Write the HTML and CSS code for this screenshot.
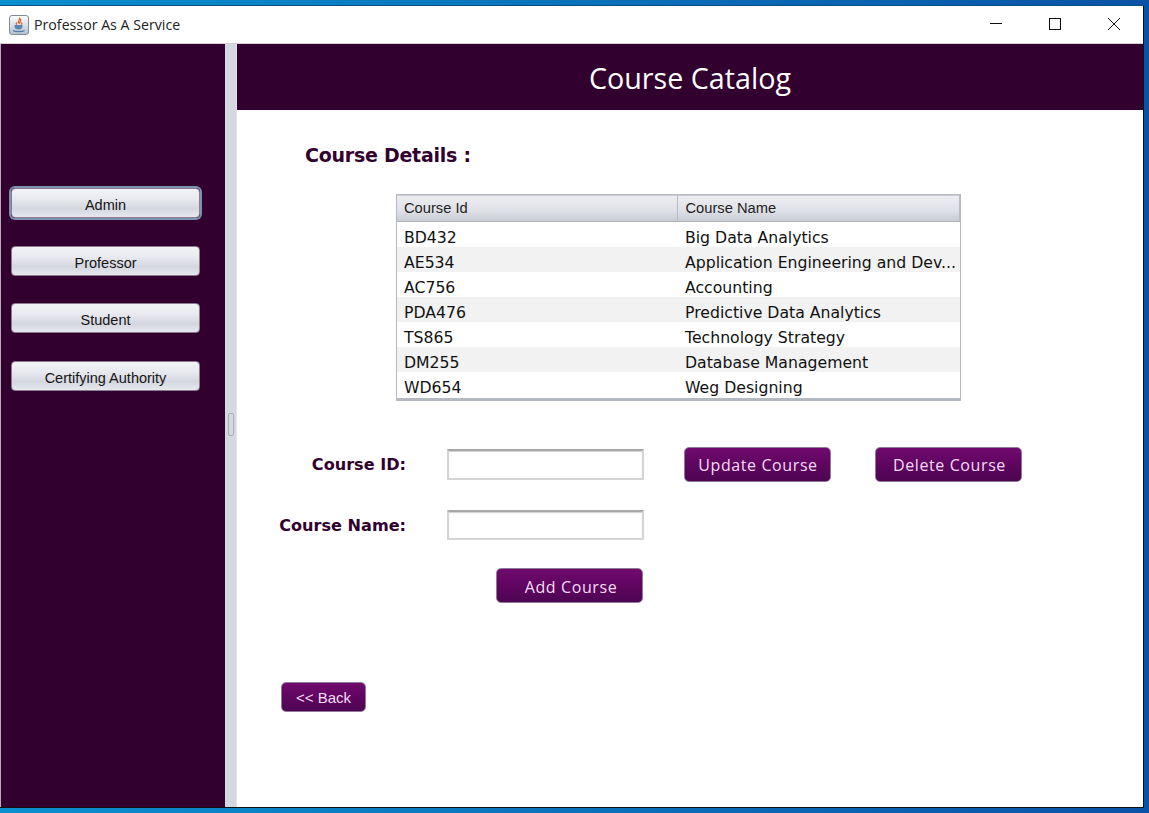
FILE: index.html
```html
<!DOCTYPE html>
<html>
<head>
<meta charset="UTF-8">
<title>Professor As A Service</title>
<link rel="stylesheet" href="styles.css">
</head>
<body>
<div class="window">
	<div class="titlebar">
		<svg class="java_icon" width="20" height="20" viewBox="0 0 20 20">
			<defs>
				<linearGradient id="icon_bg" x1="0" y1="0" x2="0" y2="1">
					<stop offset="0" stop-color="#fdfdfd"/>
					<stop offset="1" stop-color="#b4c2d2"/>
				</linearGradient>
			</defs>
			<rect x="0.5" y="0.5" width="19" height="19" rx="2.5" fill="url(#icon_bg)" stroke="#7f8c99"/>
			<path d="M10.500 2.500c1.500 2-2 3-1 5 .3.6 1 1 1 1-.9-1.200 2.600-2.600.9-4.600M8 7.500c-1 1-1 1.500 0 2M12 7.500c1 1 1 1.500 0 2" fill="none" stroke="#d9622b" stroke-width="1.200"/>
			<path d="M5.500 10h8v1.500c0 2-1.500 3-4 3s-4-1-4-3z" fill="#5b86ad"/>
			<path d="M4 15.500c2 1.500 9 1.500 11.500 0" fill="none" stroke="#4f7aa3" stroke-width="1.200"/>
		</svg>
		<span class="win_title">Professor As A Service</span>
		<div class="win_btns">
			<svg width="59" height="38" viewBox="0 0 59 38"><path d="M24 17.500h12" stroke="#111" fill="none"/></svg>
			<svg width="59" height="38" viewBox="0 0 59 38"><rect x="24.500" y="12.500" width="11" height="11" stroke="#111" fill="none"/></svg>
			<svg width="59" height="38" viewBox="0 0 59 38"><path d="M24 12l12 12M36 12L24 24" stroke="#111" fill="none"/></svg>
		</div>
	</div>
	<div class="app">
		<div class="sidebar">
			<button class="side_btn focused">Admin</button>
			<button class="side_btn">Professor</button>
			<button class="side_btn">Student</button>
			<button class="side_btn">Certifying Authority</button>
		</div>
		<div class="splitter"><span class="grip"></span></div>
		<div class="main">
			<div class="header">Course Catalog</div>
			<h2 class="section_title">Course Details :</h2>
			<div class="table_wrap">
				<table class="course_table">
					<thead>
						<tr><th class="col_id">Course Id</th><th>Course Name</th></tr>
					</thead>
					<tbody>
						<tr><td>BD432</td><td>Big Data Analytics</td></tr>
						<tr><td>AE534</td><td>Application Engineering and Dev...</td></tr>
						<tr><td>AC756</td><td>Accounting</td></tr>
						<tr><td>PDA476</td><td>Predictive Data Analytics</td></tr>
						<tr><td>TS865</td><td>Technology Strategy</td></tr>
						<tr><td>DM255</td><td>Database Management</td></tr>
						<tr><td>WD654</td><td>Weg Designing</td></tr>
					</tbody>
				</table>
			</div>
			<div class="form_row first_row">
				<label class="field_label">Course ID:</label>
				<input class="field_input" type="text">
				<button class="purple_btn update_btn">Update Course</button>
				<button class="purple_btn delete_btn">Delete Course</button>
			</div>
			<div class="form_row">
				<label class="field_label">Course Name:</label>
				<input class="field_input short" type="text">
			</div>
			<div class="form_row add_row">
				<button class="purple_btn add_btn">Add Course</button>
			</div>
			<button class="purple_btn back_btn">&lt;&lt; Back</button>
		</div>
	</div>
</div>
</body>
</html>
```

FILE: styles.css
```css
*{margin: 0;padding: 0;box-sizing: border-box;}
html,body{height: 813px;overflow: hidden;}
body{
	background: linear-gradient(90deg, #0a8fcf 0%, #0a78c0 40%, #0a52a8 100%);
	padding-top: 5px;
	font-family: "Liberation Sans", sans-serif;
}
.window{
	width: 1144px;
	height: 803px;
	border-top: 1px solid #08507f;
	border-right: 1px solid #111;
	border-bottom: 1px solid #111;
	display: flex;
	flex-direction: column;
	background: #fff;
}
.titlebar{
	height: 38px;
	flex: none;
	display: flex;
	align-items: center;
	padding-left: 9px;
	background: #fff;
	border-bottom: 1px solid #d8cfd8;
}
.java_icon{flex: none;margin-top: 1px;}
.win_title{
	margin-left: 5px;
	font-family: "Open Sans", sans-serif;
	font-size: 14.200px;
	color: #222;
}
.win_btns{margin-left: auto;display: flex;}
.win_btns svg{display: block;}
.app{flex: 1;display: flex;min-height: 0;}
.sidebar{
	width: 225px;
	flex: none;
	background: #32002f;
	border-left: 1px solid #b9aab9;
	padding: 144px 0 0 10px;
}
.side_btn{
	display: block;
	width: 189px;
	height: 30px;
	margin-bottom: 27.500px;
	padding-top: 4px;
	border: 1px solid #8d7a90;
	border-radius: 4px;
	background: linear-gradient(180deg, #f2f3f6 0%, #e9eaef 35%, #d5d7e0 70%, #e6e8ee 100%);
	font-family: "Liberation Sans", sans-serif;
	font-size: 14.500px;
	color: #151515;
}
.side_btn.focused{box-shadow: 0 0 0 2px #7d92b4;}
.splitter{
	width: 11px;
	flex: none;
	background: #d4d8e0;
	display: flex;
	justify-content: center;
	padding-top: 369px;
}
.grip{
	display: block;
	width: 6px;
	height: 23px;
	border: 1px solid #a8acb6;
	border-radius: 2px;
}
.main{flex: 1;min-width: 0;background: #fff;border-left: 1px solid #e4e4ea;}
.header{
	height: 66px;
	background: #32002f;
	color: #fff;
	font-family: "Open Sans", sans-serif;
	font-size: 28.700px;
	line-height: 67px;
	text-align: center;
}
.section_title{
	margin: 33px 0 0 68px;
	height: 24px;
	font-family: "DejaVu Sans", sans-serif;
	font-size: 19px;
	letter-spacing: -0.250px;
	line-height: 24px;
	font-weight: bold;
	color: #32002f;
}
.table_wrap{
	margin: 27px 0 0 159px;
	width: 565px;
	height: 207px;
	border: 1px solid #b4b8c0;
	border-bottom-width: 3px;
	background: #fff;
}
.course_table{
	width: 100%;
	border-collapse: collapse;
	table-layout: fixed;
}
.course_table th{
	height: 26px;
	padding-left: 7px;
	text-align: left;
	font-weight: normal;
	font-size: 14.700px;
	color: #222;
	background: linear-gradient(180deg, #eceef2 0%, #dfe1e7 60%, #c9ccd6 100%);
	border-bottom: 1px solid #aeb2bb;
	border-right: 1px solid #b9bcc5;
	box-shadow: inset 0 1px 0 #c9ccd4;
}
.course_table .col_id{width: 280px;}
.course_table td{
	height: 25px;
	padding: 6px 0 0 7px;
	line-height: 19px;
	font-family: "DejaVu Sans", sans-serif;
	font-size: 15.700px;
	color: #111;
	white-space: nowrap;
	overflow: hidden;
}
.course_table th:last-child,.course_table td:last-child{padding-left: 8px;}
.course_table tbody tr:nth-child(even){background: #f2f2f2;}
.form_row{
	display: flex;
	align-items: center;
	height: 30px;
	margin-top: 28px;
}
.first_row{height: 35px;margin-top: 46px;}
.add_row{height: 35px;}
.field_label{
	width: 169px;
	margin-right: 41px;
	text-align: right;
	font-family: "DejaVu Sans", sans-serif;
	font-size: 16.100px;
	font-weight: bold;
	color: #32002f;
}
.field_input{
	width: 197px;
	height: 31px;
	border: 2px solid #d4d4d4;
	border-top-color: #a8a8a8;
	box-shadow: inset 0 1px 1px #cfcfcf;
	background: #fff;
}
.field_input.short{height: 30px;}
.purple_btn{
	width: 147px;
	height: 35px;
	border: 1px solid #8f7a98;
	border-radius: 5px;
	background: linear-gradient(180deg, #700a6e 0%, #5f0560 50%, #4d0552 100%);
	color: #f7dcf7;
	font-family: "Open Sans", sans-serif;
	font-size: 16px;
	letter-spacing: 0.600px;
	flex: none;
}
.update_btn{margin-left: 40px;padding-left: 1px;}
.delete_btn{margin-left: 44px;padding-left: 2px;}
.add_btn{margin-left: 259px;padding: 2px 0 0 3px;}
.back_btn{
	display: block;
	width: 85px;
	height: 30px;
	margin: 79px 0 0 44px;
	font-family: "Liberation Sans", sans-serif;
	font-size: 15px;
	letter-spacing: 0;
}
```
